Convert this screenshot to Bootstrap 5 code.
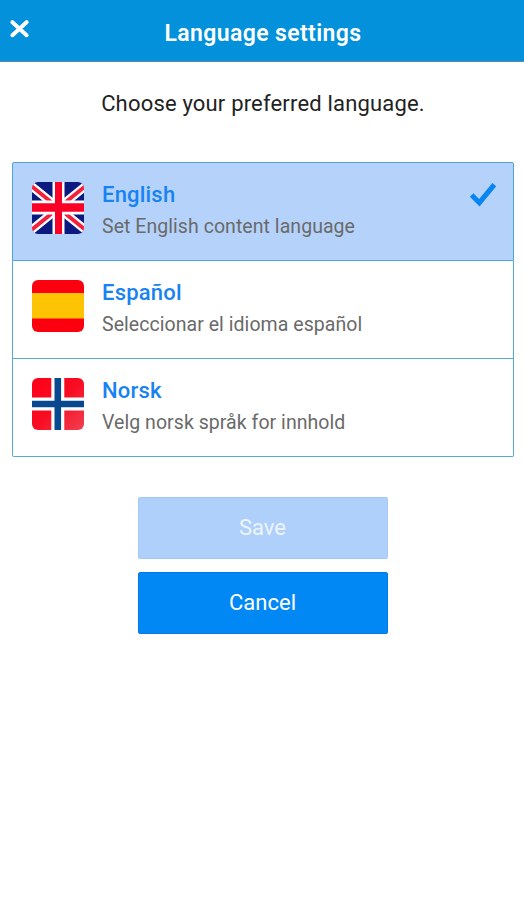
<!DOCTYPE html>
<html lang="en">
<head>
<meta charset="utf-8">
<meta name="viewport" content="width=device-width, initial-scale=1">
<title>Language settings</title>
<link href="https://cdn.jsdelivr.net/npm/bootstrap@5.3.0/dist/css/bootstrap.min.css" rel="stylesheet">
<style>
body{font-family:Roboto,"Liberation Sans",sans-serif;background:#fff;color:#222}
.app-bar{height:62px;background:#0291da;border-bottom:1px solid #5b86b5;padding:7px 28px 0 9px}
.app-title{font-size:23px;line-height:28px;font-weight:600;letter-spacing:.38px;color:#fff}
.close-btn{width:21px;height:21px;margin-bottom:10px}
.intro{font-size:22px;line-height:28px;letter-spacing:.18px;margin-top:28px;margin-bottom:44px;padding-left:1px}
.lang-list{margin:0 10px 0 12px;--bs-list-group-border-color:#55a9dc;--bs-list-group-border-radius:2px}
.lang-item{height:98px;padding:19px 16px 0 19px;--bs-list-group-active-bg:#b5d3fa;--bs-list-group-active-border-color:#4da5de}
.lang-item:first-child{height:99px}
.flag{width:52px;height:52px;border-radius:6px;margin-right:18px}
.lang-name{font-size:22px;line-height:26px;font-weight:500;letter-spacing:.2px;color:#1782f2}
.lang-note{font-size:19.5px;line-height:24px;letter-spacing:.05px;margin-top:7px;color:#6a6a6a}
.actions{width:250px;margin-top:40px;gap:13px}
.action{height:62px;font-size:22px;--bs-btn-border-radius:2px;--bs-btn-bg:#0288f5;--bs-btn-border-color:#0878e6;--bs-btn-disabled-bg:#afd0fa;--bs-btn-disabled-border-color:#a4c9f5;--bs-btn-disabled-opacity:1;padding-top:5px}
.action:disabled{color:#eef5fe}
main{padding-left:1px}
.lang-list{margin-left:11px}
</style>
</head>
<body>
<header class="app-bar d-flex align-items-center">
  <button type="button" class="close-btn btn p-0 border-0 d-flex" aria-label="Close">
    <svg width="21" height="21" viewBox="0 0 21 21"><path d="M3.4 3.200 17.600 16.200M17.600 3.200 3.400 16.200" stroke="#fff" stroke-width="4" stroke-linecap="round" fill="none"/></svg>
  </button>
  <h1 class="app-title flex-grow-1 text-center mb-0">Language settings</h1>
</header>
<main>
  <p class="intro text-center">Choose your preferred language.</p>
  <div class="lang-list list-group">
    <div class="lang-item list-group-item active d-flex align-items-start">
      <svg class="flag flex-shrink-0" viewBox="0 0 52 52">
        <rect width="52" height="52" fill="#0a1a80"/>
        <path d="M-8 -2 61 54M61 -2 -8 54" stroke="#fff" stroke-width="8.500"/>
        <path d="M-8 -2 61 54M61 -2 -8 54" stroke="#f5203c" stroke-width="3.800"/>
        <path d="M26.500 0V52" stroke="#fff" stroke-width="12"/>
        <path d="M0 25.500H52" stroke="#fff" stroke-width="14"/>
        <path d="M26.500 0V52" stroke="#fb0027" stroke-width="7"/>
        <path d="M0 25.500H52" stroke="#fb0027" stroke-width="8.500"/>
      </svg>
      <div class="flex-grow-1">
        <div class="lang-name">English</div>
        <div class="lang-note">Set English content language</div>
      </div>
      <svg class="flex-shrink-0" width="28" height="27" viewBox="0 0 28 27"><path d="M2.600 13 10.400 20.700 25.300 2.700" stroke="#0786f3" stroke-width="5" fill="none"/></svg>
    </div>
    <div class="lang-item list-group-item d-flex align-items-start">
      <svg class="flag flex-shrink-0" viewBox="0 0 52 52">
        <rect width="52" height="52" fill="#fc0010"/>
        <rect y="13" width="52" height="25.500" fill="#fec302"/>
      </svg>
      <div class="flex-grow-1">
        <div class="lang-name">Español</div>
        <div class="lang-note">Seleccionar el idioma español</div>
      </div>
    </div>
    <div class="lang-item list-group-item d-flex align-items-start">
      <svg class="flag flex-shrink-0" viewBox="0 0 52 52">
        <defs><linearGradient id="red" x1="0" y1="0" x2="1" y2="1"><stop offset="0" stop-color="#ff0018"/><stop offset=".5" stop-color="#f80c22"/><stop offset="1" stop-color="#f04052"/></linearGradient></defs>
        <rect width="52" height="52" fill="url(#red)"/>
        <path d="M25.800 0V52M0 26H52" stroke="#fff" stroke-width="13"/>
        <path d="M25.800 0V52M0 26H52" stroke="#07488f" stroke-width="6.600"/>
      </svg>
      <div class="flex-grow-1">
        <div class="lang-name">Norsk</div>
        <div class="lang-note">Velg norsk språk for innhold</div>
      </div>
    </div>
  </div>
  <div class="actions d-flex flex-column mx-auto">
    <button type="button" class="action btn btn-primary" disabled>Save</button>
    <button type="button" class="action btn btn-primary">Cancel</button>
  </div>
</main>
<script src="https://cdn.jsdelivr.net/npm/bootstrap@5.3.0/dist/js/bootstrap.bundle.min.js"></script>
</body>
</html>
